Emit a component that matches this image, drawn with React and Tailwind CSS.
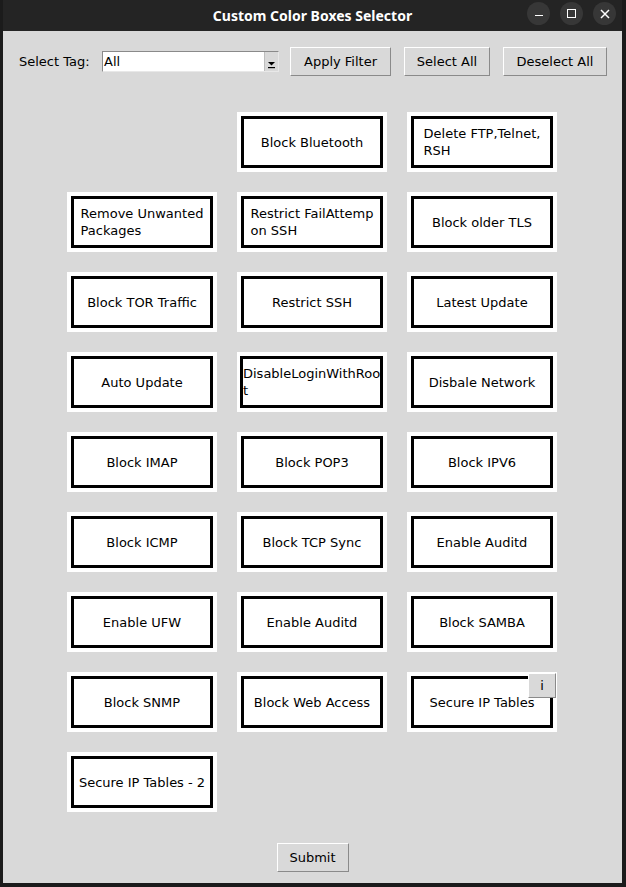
import React from "react";

const rows = [
  [null, { lines: ["Block Bluetooth"] }, { lines: ["Delete FTP,Telnet,", "RSH"] }],
  [{ lines: ["Remove Unwanted", "Packages"] }, { lines: ["Restrict FailAttemp", "on SSH"] }, { lines: ["Block older TLS"] }],
  [{ lines: ["Block TOR Traffic"] }, { lines: ["Restrict SSH"] }, { lines: ["Latest Update"] }],
  [{ lines: ["Auto Update"] }, { lines: ["DisableLoginWithRoo", "t"], start: true }, { lines: ["Disbale Network"] }],
  [{ lines: ["Block IMAP"] }, { lines: ["Block POP3"] }, { lines: ["Block IPV6"] }],
  [{ lines: ["Block ICMP"] }, { lines: ["Block TCP Sync"] }, { lines: ["Enable Auditd"] }],
  [{ lines: ["Enable UFW"] }, { lines: ["Enable Auditd"] }, { lines: ["Block SAMBA"] }],
  [{ lines: ["Block SNMP"] }, { lines: ["Block Web Access"] }, { lines: ["Secure IP Tables"], info: true }],
  [{ lines: ["Secure IP Tables - 2"] }, null, null],
];

const font = { fontFamily: '"DejaVu Sans", "Liberation Sans", sans-serif' };

function TkButton({ children, className }) {
  return (
    <div
      className={
        "flex items-center justify-center bg-[#d9d9d9] border border-t-white border-l-white border-b-[#8a8a8a] border-r-[#8a8a8a] text-[13px] text-black " +
        (className || "")
      }
    >
      {children}
    </div>
  );
}

function Box({ item }) {
  if (!item) return <div className="w-[150px] h-[60px]" />;
  return (
    <div className="relative w-[150px] h-[60px] bg-white p-[4px]">
      <div
        className={
          "h-full border-[3px] border-black flex items-center overflow-hidden " +
          (item.start ? "justify-start -ml-px" : "justify-center")
        }
      >
        <div className="text-left text-[13px] leading-[17px] text-black whitespace-nowrap">
          {item.lines.map((l, i) => (
            <div key={i}>{l}</div>
          ))}
        </div>
      </div>
      {item.info && (
        <div className="absolute left-[121px] top-[1px] w-[28px] h-[25px] flex items-center justify-center bg-[#d9d9d9] border border-t-white border-l-white border-b-[#8a8a8a] border-r-[#8a8a8a] text-[13px] text-black">
          i
        </div>
      )}
    </div>
  );
}

export default function App() {
  return (
    <div className="w-[626px] h-[887px] bg-[#1b1b1b] overflow-hidden" style={font}>
      <div className="ml-[3px] w-[619px] flex flex-col">
        {/* Title bar */}
        <div className="relative h-[31px] bg-[#242424] flex items-center justify-center">
          <div
            className="text-white font-bold text-[14px]"
            style={{ fontFamily: '"Noto Sans", "DejaVu Sans", sans-serif' }}
          >
            Custom Color Boxes Selector
          </div>
          <div className="absolute right-[6px] top-[2px] flex gap-[10px]">
            <div className="w-[23px] h-[23px] rounded-full bg-[#373737] flex items-center justify-center">
              <div className="w-[8px] h-[1.5px] bg-white mt-[4px]" />
            </div>
            <div className="w-[23px] h-[23px] rounded-full bg-[#373737] flex items-center justify-center">
              <div className="w-[9px] h-[9px] border-[1.5px] border-white" />
            </div>
            <div className="w-[23px] h-[23px] rounded-full bg-[#373737] flex items-center justify-center">
              <svg width="10" height="10" viewBox="0 0 10 10">
                <path d="M1 1 L9 9 M9 1 L1 9" stroke="white" strokeWidth="1.5" />
              </svg>
            </div>
          </div>
        </div>

        {/* Content */}
        <div className="h-[852px] bg-[#d9d9d9] flex flex-col">
          {/* Header row */}
          <div className="flex items-center pl-[16px] pt-[16px] h-[45px]">
            <div className="text-[13px] text-black w-[73px]">Select Tag:</div>
            <div className="ml-[10px] w-[177px] h-[21px] bg-white border border-t-[#8a8a8a] border-l-[#8a8a8a] border-b-[#e8e8e8] border-r-[#e8e8e8] flex items-center">
              <div className="flex-1 pl-[1px] text-[13px] text-black leading-none">All</div>
              <div className="w-[14px] h-full bg-[#d9d9d9] border-l border-[#bdbdbd] flex items-end justify-center pb-[2px]">
                <svg width="9" height="8" viewBox="0 0 9 8">
                  <path d="M1 1 L8 1 L4.5 4.5 Z" fill="black" />
                  <rect x="1" y="6" width="7" height="1.2" fill="black" />
                </svg>
              </div>
            </div>
            <TkButton className="ml-[11px] w-[101px] h-[29px]">Apply Filter</TkButton>
            <TkButton className="ml-[13px] w-[86px] h-[29px]">Select All</TkButton>
            <TkButton className="ml-[13px] w-[104px] h-[29px]">Deselect All</TkButton>
          </div>

          {/* Grid */}
          <div className="mt-[36px] pl-[64px] grid grid-cols-[150px_150px_150px] gap-[20px]">
            {rows.flat().map((item, i) => (
              <Box key={i} item={item} />
            ))}
          </div>

          {/* Submit */}
          <div className="mt-[31px] flex justify-center">
            <TkButton className="w-[72px] h-[29px]">Submit</TkButton>
          </div>
        </div>
      </div>
    </div>
  );
}
